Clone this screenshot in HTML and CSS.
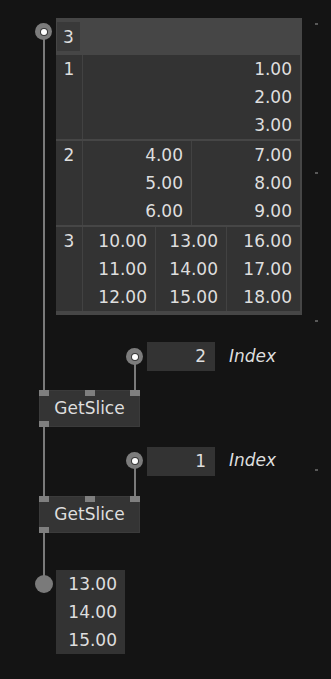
FILE: index.html
```html
<!DOCTYPE html>
<html lang="en">
<head>
    <meta charset="UTF-8">
    <meta name="viewport" content="width=device-width, initial-scale=1.0">
    <title>GetSlice Patch</title>
    <link rel="stylesheet" href="styles.css">
</head>
<body>
    <div class="patch">
        <div class="grid-dots">
            <span class="dot"></span>
            <span class="dot"></span>
            <span class="dot"></span>
            <span class="dot"></span>
        </div>

        <!-- wires -->
        <div class="wire wire-spread"></div>
        <div class="wire wire-index1"></div>
        <div class="wire wire-slice"></div>
        <div class="wire wire-index2"></div>
        <div class="wire wire-out"></div>

        <!-- spread input -->
        <span class="pin-io pin-spread"><span class="pin-core"></span></span>
        <div class="spread">
            <div class="spread-head">
                <div class="count">3</div>
            </div>
            <div class="spread-rows">
                <div class="spread-row">
                    <div class="row-index">1</div>
                    <div class="cells cols-1">
                        <div class="cell"><span>1.00</span><span>2.00</span><span>3.00</span></div>
                    </div>
                </div>
                <div class="spread-row">
                    <div class="row-index">2</div>
                    <div class="cells cols-2">
                        <div class="cell"><span>4.00</span><span>5.00</span><span>6.00</span></div>
                        <div class="cell"><span>7.00</span><span>8.00</span><span>9.00</span></div>
                    </div>
                </div>
                <div class="spread-row">
                    <div class="row-index">3</div>
                    <div class="cells cols-3">
                        <div class="cell"><span>10.00</span><span>11.00</span><span>12.00</span></div>
                        <div class="cell"><span>13.00</span><span>14.00</span><span>15.00</span></div>
                        <div class="cell"><span>16.00</span><span>17.00</span><span>18.00</span></div>
                    </div>
                </div>
            </div>
        </div>

        <!-- first GetSlice -->
        <span class="pin-io pin-index1"><span class="pin-core"></span></span>
        <div class="iobox iobox-1">2</div>
        <div class="io-label label-1">Index</div>
        <div class="node node-1">
            <div class="node-pins"><span class="pin"></span><span class="pin"></span><span class="pin"></span></div>
            <div class="node-name">GetSlice</div>
            <div class="node-pins"><span class="pin"></span></div>
        </div>

        <!-- second GetSlice -->
        <span class="pin-io pin-index2"><span class="pin-core"></span></span>
        <div class="iobox iobox-2">1</div>
        <div class="io-label label-2">Index</div>
        <div class="node node-2">
            <div class="node-pins"><span class="pin"></span><span class="pin"></span><span class="pin"></span></div>
            <div class="node-name">GetSlice</div>
            <div class="node-pins"><span class="pin"></span></div>
        </div>

        <!-- output -->
        <span class="pin-out"></span>
        <div class="output">
            <span>13.00</span>
            <span>14.00</span>
            <span>15.00</span>
        </div>
    </div>
</body>
</html>
```

FILE: styles.css
```css
body {
    margin: 0;
    background-color: #141414;
    color: #dedede;
    font-family: "DejaVu Sans", sans-serif;
    font-size: 17px;
}
.patch {
    position: relative;
    width: 331px;
    height: 679px;
    overflow: hidden;
}
.grid-dots {
    position: absolute;
    left: 315px;
    top: 23px;
    display: flex;
    flex-direction: column;
    gap: 146.5px;
}
.dot {
    width: 3px;
    height: 2px;
    background-color: #585858;
}

/* wires */
.wire {
    position: absolute;
    width: 2px;
    background-color: #7a7a7a;
}
.wire-spread { left: 43px; top: 38px; height: 352px; }
.wire-index1 { left: 134px; top: 362px; height: 28px; }
.wire-slice { left: 43px; top: 426px; height: 70px; }
.wire-index2 { left: 134px; top: 466px; height: 30px; }
.wire-out { left: 43px; top: 532px; height: 44px; }

/* io pins */
.pin-io {
    position: absolute;
    width: 17px;
    height: 17px;
    border-radius: 50%;
    background-color: #7c7c7c;
    display: flex;
    align-items: center;
    justify-content: center;
}
.pin-core {
    width: 6px;
    height: 6px;
    border-radius: 50%;
    background-color: #fff;
    box-shadow: 0 0 0 1px #3a3a3a;
}
.pin-spread { left: 35px; top: 23px; }
.pin-index1 { left: 126px; top: 348px; }
.pin-index2 { left: 126px; top: 452px; }
.pin-out {
    position: absolute;
    left: 35px;
    top: 575px;
    width: 18px;
    height: 18px;
    border-radius: 50%;
    background-color: #7a7a7a;
}

/* spread table */
.spread {
    position: absolute;
    left: 56px;
    top: 18px;
    width: 246px;
    box-sizing: border-box;
    padding: 0 2px 4px 0;
    background-color: #464646;
}
.spread-head {
    height: 37px;
    box-sizing: border-box;
    padding: 4px 0 0 1px;
}
.count {
    width: 23px;
    height: 29px;
    background-color: #393939;
    display: flex;
    align-items: center;
    justify-content: center;
}
.spread-rows {
    display: flex;
    flex-direction: column;
    gap: 2px;
}
.spread-row {
    display: grid;
    grid-template-columns: 27px 1fr;
    height: 84px;
    background-color: #333;
}
.row-index {
    border-right: 1px solid #424242;
    text-align: center;
    line-height: 28px;
}
.cells {
    display: grid;
    gap: 1px;
    background-color: #424242;
}
.cols-1 { grid-template-columns: 1fr; }
.cols-2 { grid-template-columns: 1fr 1fr; }
.cols-3 { grid-template-columns: 72px 70px 1fr; }
.cell {
    display: flex;
    flex-direction: column;
    align-items: flex-end;
    padding-right: 8px;
    background-color: #333;
    line-height: 28px;
}

/* io boxes */
.iobox {
    position: absolute;
    left: 147px;
    width: 68px;
    height: 29px;
    box-sizing: border-box;
    padding-right: 9px;
    background-color: #333;
    text-align: right;
    line-height: 29px;
}
.iobox-1 { top: 342px; }
.iobox-2 { top: 447px; }
.io-label {
    position: absolute;
    left: 229px;
    font-style: italic;
    line-height: 20px;
}
.label-1 { top: 346px; }
.label-2 { top: 450px; }

/* nodes */
.node {
    position: absolute;
    left: 39px;
    width: 101px;
    height: 37px;
    display: flex;
    flex-direction: column;
    background-color: #343434;
    box-shadow: inset 0 0 0 1px #3b3b3b;
}
.node-1 { top: 390px; }
.node-2 { top: 496px; }
.node-pins {
    display: flex;
    justify-content: space-between;
    height: 6px;
}
.pin {
    width: 10px;
    height: 6px;
    background-color: #7f7f7f;
}
.node-name {
    flex: 1;
    display: flex;
    align-items: center;
    justify-content: center;
    padding-bottom: 2px;
}

/* output */
.output {
    position: absolute;
    left: 56px;
    top: 570px;
    width: 69px;
    height: 84px;
    box-sizing: border-box;
    padding-right: 8px;
    display: flex;
    flex-direction: column;
    align-items: flex-end;
    background-color: #333;
    line-height: 28px;
}
```
